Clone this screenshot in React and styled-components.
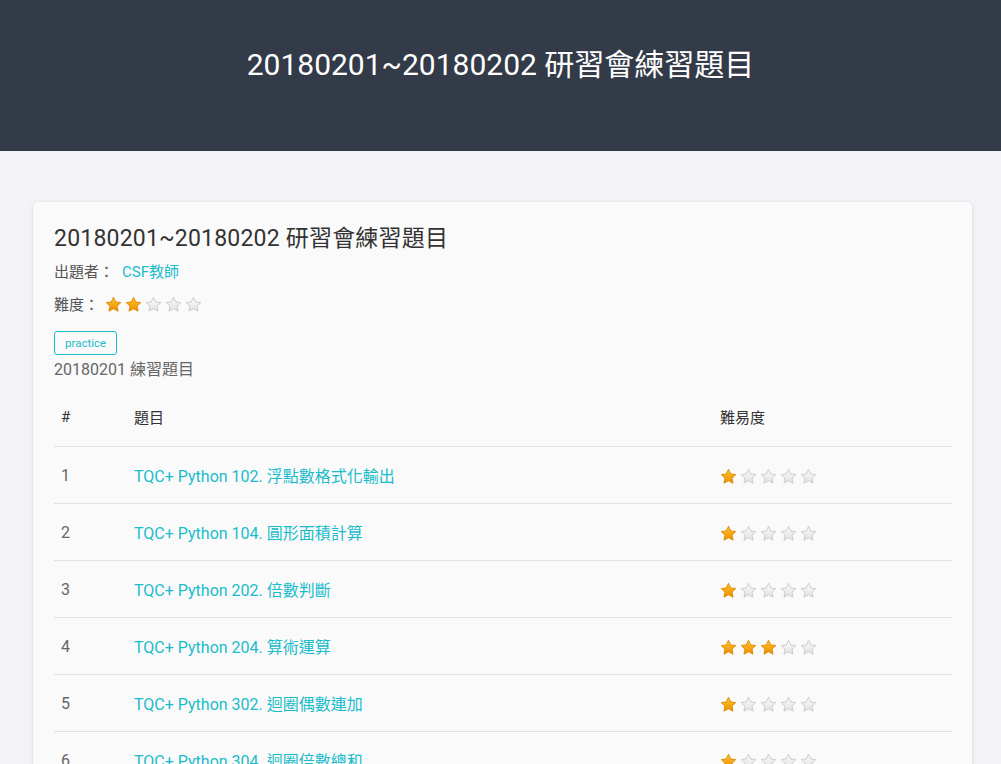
import React from "react"
import styled, { createGlobalStyle } from "styled-components"

const GlobalStyle = createGlobalStyle`
  html, body {
    margin: 0;
    padding: 0;
    background: #f3f3f7;
    font-family: Roboto, "Noto Sans CJK TC", sans-serif;
  }
`

const Header = styled.header`
  height: 151px;
  background: #333a48;
  display: flex;
  align-items: center;
  justify-content: center;
  padding-bottom: 28px;
  box-sizing: border-box;
`

const HeaderTitle = styled.h1`
  margin: 0;
  color: #fff;
  font-weight: 400;
  font-size: 30px;
`

const Main = styled.main`
  padding: 51px 29px 0 33px;
`

const Card = styled.section`
  background: #fafafa;
  border-radius: 5px;
  box-shadow: 0 1px 4px rgba(0, 0, 0, 0.12);
  padding: 22px 20px 0 21px;
  height: 600px;
`

const Title = styled.h2`
  margin: 0 0 7px;
  font-size: 23px;
  font-weight: 400;
  color: #333;
  letter-spacing: 0.2px;
  line-height: 30px;
`

const Meta = styled.div`
  display: flex;
  align-items: center;
  font-size: 15px;
  color: #555;
  height: 18px;
  margin-bottom: 15px;
`

const Label = styled.span`
  margin-right: ${p => p.gap || "8px"};
`

const Link = styled.a`
  color: #1bbccb;
  text-decoration: none;
`

const Tag = styled.span`
  display: inline-block;
  border: 1px solid #1bbccb;
  border-radius: 3px;
  color: #1bbccb;
  font-size: 11.5px;
  padding: 0 10px;
  height: 22px;
  line-height: 22px;
  margin-top: 4px;
`

const Desc = styled.div`
  font-size: 16px;
  color: #666;
  margin-top: 1px;
`

const Table = styled.table`
  width: 100%;
  border-collapse: collapse;
  table-layout: fixed;
  margin-top: 10px;
  font-size: 16px;
`

const Th = styled.th`
  text-align: left;
  font-weight: 400;
  font-size: 15px;
  color: #333;
  padding: 0 7px 3px;
  height: 53px;
  border-bottom: 1px solid #e3e3e3;
  width: ${p => p.w || "auto"};
`

const Td = styled.td`
  padding: 0 7px;
  height: 56px;
  border-bottom: 1px solid #e3e3e3;
  color: #666;
`

const StarRow = styled.span`
  display: inline-flex;
  gap: 3px;
  vertical-align: middle;
  margin-top: 2px;
`

function Star({ on }) {
  const id = on ? "sOn" : "sOff"
  return (
    <svg width="17" height="17" viewBox="0 0 24 24">
      <path
        d="M12 1.8l3.1 6.6 7.2.9-5.3 5 1.4 7.1L12 17.9l-6.4 3.5 1.4-7.1-5.3-5 7.2-.9z"
        fill={`url(#${id})`}
        stroke={on ? "#d98a00" : "#c8c8c8"}
        strokeWidth="1.3"
        strokeLinejoin="round"
      />
    </svg>
  )
}

function Stars({ n }) {
  return (
    <StarRow>
      {[1, 2, 3, 4, 5].map(i => (
        <Star key={i} on={i <= n} />
      ))}
    </StarRow>
  )
}

const problems = [
  ["TQC+ Python 102. 浮點數格式化輸出", 1],
  ["TQC+ Python 104. 圓形面積計算", 1],
  ["TQC+ Python 202. 倍數判斷", 1],
  ["TQC+ Python 204. 算術運算", 3],
  ["TQC+ Python 302. 迴圈偶數連加", 1],
  ["TQC+ Python 304. 迴圈倍數總和", 1],
]

export default function App() {
  return (
    <>
      <GlobalStyle />
      <svg width="0" height="0" style={{ position: "absolute" }}>
        <defs>
          <linearGradient id="sOn" x1="0" y1="0" x2="0" y2="1">
            <stop offset="0" stopColor="#ffc629" />
            <stop offset="1" stopColor="#f08c00" />
          </linearGradient>
          <linearGradient id="sOff" x1="0" y1="0" x2="0" y2="1">
            <stop offset="0" stopColor="#fbfbfb" />
            <stop offset="1" stopColor="#e2e2e2" />
          </linearGradient>
        </defs>
      </svg>
      <Header>
        <HeaderTitle>20180201~20180202 研習會練習題目</HeaderTitle>
      </Header>
      <Main>
        <Card>
          <Title>20180201~20180202 研習會練習題目</Title>
          <Meta>
            <Label>出題者：</Label>
            <Link href="#">CSF教師</Link>
          </Meta>
          <Meta>
            <Label gap="6px">難度：</Label>
            <Stars n={2} />
          </Meta>
          <Tag>practice</Tag>
          <Desc>20180201 練習題目</Desc>
          <Table>
            <thead>
              <tr>
                <Th w="59px">#</Th>
                <Th>題目</Th>
                <Th w="225px">難易度</Th>
              </tr>
            </thead>
            <tbody>
              {problems.map(([name, lv], i) => (
                <tr key={name}>
                  <Td>{i + 1}</Td>
                  <Td>
                    <Link href="#">{name}</Link>
                  </Td>
                  <Td>
                    <Stars n={lv} />
                  </Td>
                </tr>
              ))}
            </tbody>
          </Table>
        </Card>
      </Main>
    </>
  )
}
